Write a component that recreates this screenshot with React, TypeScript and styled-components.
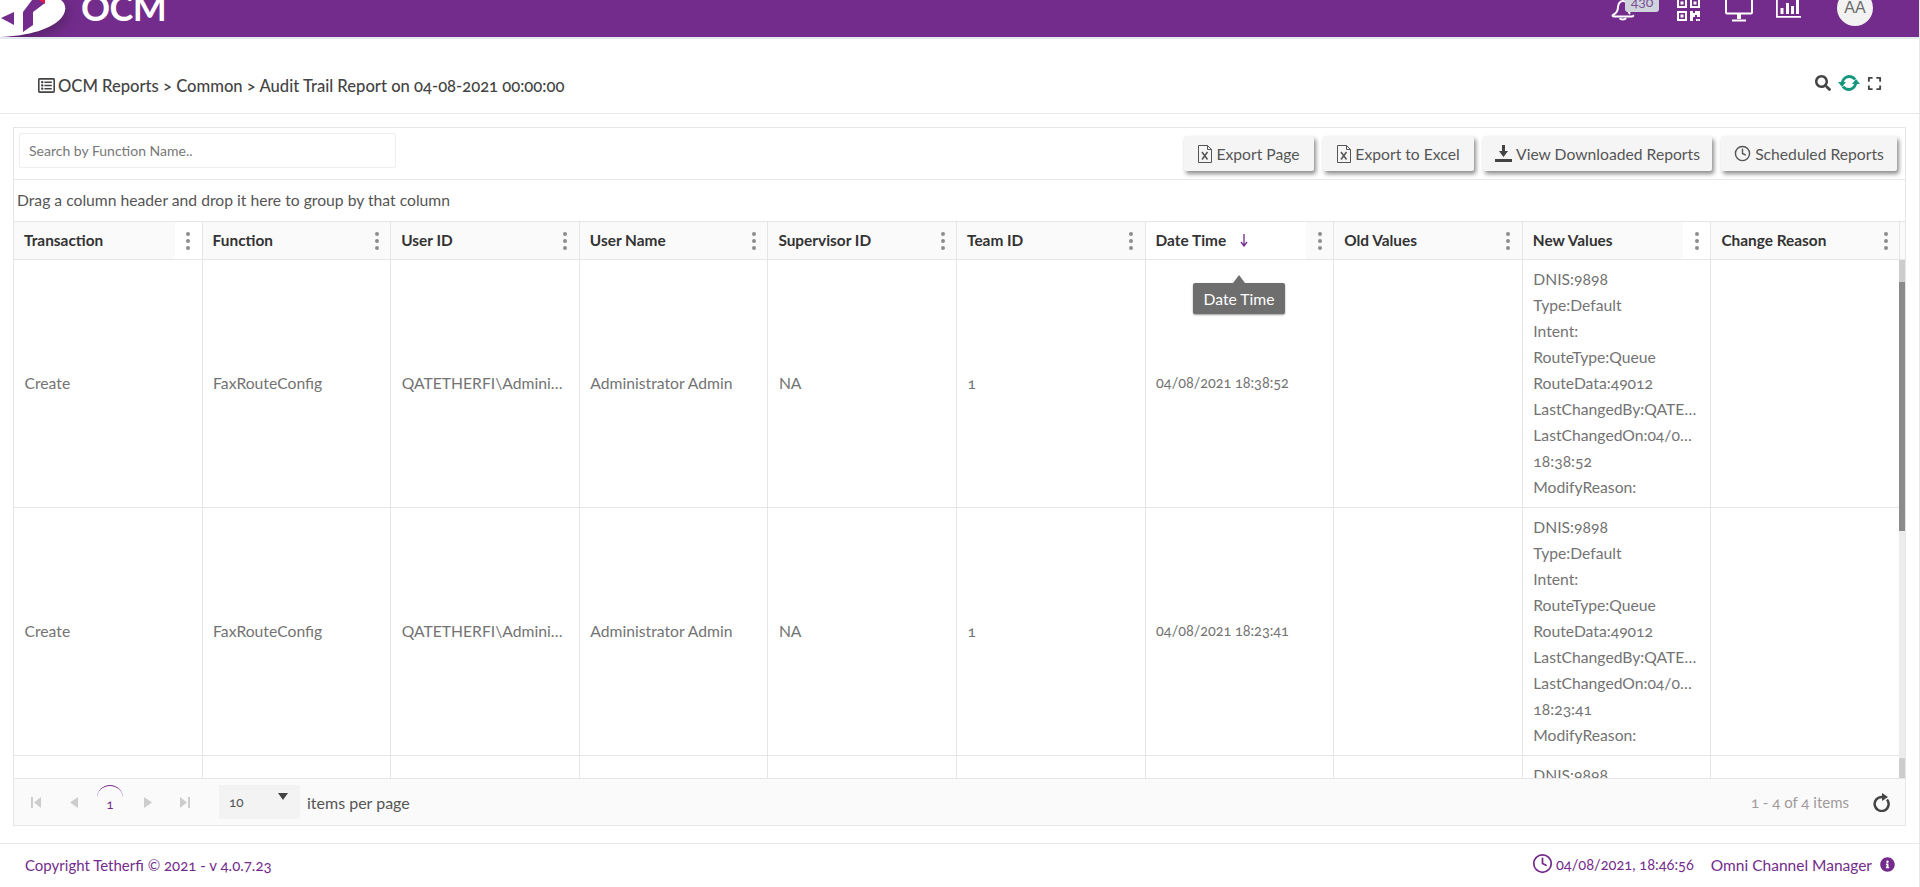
import React from "react";
import styled, { createGlobalStyle } from "styled-components";
import { FaRegListAlt, FaSearch, FaExpand, FaInfoCircle } from "react-icons/fa";
import { FiClock } from "react-icons/fi";

const Global = createGlobalStyle`
  html, body { margin: 0; padding: 0; background: #fff; overflow: hidden; }
  * { box-sizing: border-box; }
  body {
    font-family: Lato, "Open Sans", sans-serif;
    font-size: 15.7px;
    font-feature-settings: "onum" 1;
    color: #555;
  }
`;

const Page = styled.div`
  position: relative;
  height: 887px;
  display: flex;
  flex-direction: column;
  border-right: 1px solid #e8e8e8;
`;

const TopBar = styled.header`
  position: relative;
  height: 39px;
  flex: none;
  background: #732c8c;
  border-bottom: 2px solid #e6e8ef;
  display: flex;
  justify-content: space-between;
  align-items: flex-start;
  overflow: hidden;
`;

const Brand = styled.div`
  margin-left: 81px;
  margin-top: -12px;
  font-size: 36px;
  line-height: 39px;
  font-weight: 700;
  color: #fff;
  letter-spacing: -0.6px;
`;

const LogoBox = styled.svg`
  position: absolute;
  left: 0;
  top: 0;
  z-index: 3;
  overflow: visible;
  filter: drop-shadow(3px 4px 6px rgba(40, 20, 50, 0.38));
`;

const TopIcons = styled.div`
  position: relative;
  height: 37px;
  width: 320px;
  flex: none;
`;

const TopIcon = styled.svg<{ $x: number; $y: number }>`
  position: absolute;
  left: ${(p) => p.$x}px;
  top: ${(p) => p.$y}px;
  color: #fff;
`;

const Badge = styled.span`
  position: absolute;
  left: 26px;
  top: -8px;
  width: 34px;
  height: 20px;
  border-radius: 3px;
  background: #cfd4dc;
  color: #7b4f96;
  font-size: 14px;
  line-height: 20px;
  text-align: center;
`;

const Avatar = styled.span`
  position: absolute;
  left: 238px;
  top: -10px;
  width: 36px;
  height: 36px;
  border-radius: 50%;
  background: #f2f2f2;
  color: #6b6b6b;
  font-family: "Liberation Sans", sans-serif;
  font-size: 16px;
  display: flex;
  align-items: center;
  justify-content: center;
`;

const TitleBar = styled.div`
  height: 75px;
  flex: none;
  border-bottom: 1px solid #e8e8e8;
  padding: 19px 37px 0 38px;
  display: flex;
  align-items: center;
  justify-content: space-between;
`;

const Crumb = styled.div`
  display: flex;
  align-items: center;
  gap: 3px;
  font-size: 16.6px;
  font-weight: 500;
  color: #444;
`;

const TitleTools = styled.div`
  display: flex;
  align-items: center;
  gap: 7px;
  color: #444;
  margin-top: -5px;
`;

const Panel = styled.section`
  margin: 13px 13px 0 13px;
  height: 699px;
  width: 1893px;
  flex: none;
  border: 1px solid #e6e6e6;
  display: flex;
  flex-direction: column;
  overflow: hidden;
`;

const Toolbar = styled.div`
  height: 52px;
  flex: none;
  border-bottom: 1px solid #e8e8e8;
  padding: 5px 8px 0 5px;
  display: flex;
  justify-content: space-between;
  align-items: flex-start;
`;

const SearchBox = styled.input`
  width: 377px;
  height: 35px;
  padding: 0 9px;
  border: 1px solid #eeeeee;
  border-radius: 2px;
  font: inherit;
  font-size: 14px;
  color: #555;
  &::placeholder { color: #777; opacity: 1; }
`;

const ButtonRow = styled.div`
  display: flex;
  gap: 9px;
  padding-top: 3px;
`;

const ActionButton = styled.button<{ $w: number }>`
  width: ${(p) => p.$w}px;
  height: 35px;
  border: 0;
  border-radius: 2px;
  background: #f5f5f5;
  box-shadow: 2px 3px 4px rgba(0, 0, 0, 0.45);
  font: inherit;
  color: #555;
  display: flex;
  align-items: center;
  justify-content: center;
  gap: 4px;
  padding: 0;
  white-space: nowrap;
`;

const GroupHint = styled.div`
  height: 41px;
  flex: none;
  padding: 0 0 2px 3px;
  display: flex;
  align-items: center;
  color: #555;
`;

const Grid = styled.div`
  display: grid;
  grid-template-columns: repeat(10, 1fr);
  width: 1886px;
`;

const HeadRow = styled(Grid)`
  height: 39px;
  flex: none;
  border-top: 1px solid #e6e6e6;
  border-bottom: 1px solid #e6e6e6;
  background: #fafafa;
  width: 1891px;
  padding-right: 5px;
`;

const HeadCell = styled.div`
  border-right: 1px solid #e6e6e6;
  display: flex;
  align-items: stretch;
  justify-content: space-between;
  font-weight: 700;
  font-size: 15.4px;
  color: #333;
  min-width: 0;
`;

const HeadTitle = styled.div<{ $active?: boolean }>`
  flex: 1;
  padding: 0 0 1px 10px;
  background: ${(p) => (p.$active ? "#fff" : "transparent")};
  display: flex;
  align-items: center;
  gap: 14px;
`;

const Kebab = styled.div<{ $lit?: boolean }>`
  width: 27px;
  flex: none;
  background: ${(p) => (p.$lit ? "#fff" : "transparent")};
  display: flex;
  flex-direction: column;
  align-items: center;
  justify-content: center;
  gap: 3px;
  i {
    width: 4px;
    height: 4px;
    border-radius: 50%;
    background: #8d8d8d;
  }
`;

const Body = styled.div`
  position: relative;
  flex: 1;
  min-height: 0;
  overflow: hidden;
  color: #737373;
`;

const Row = styled(Grid)`
  height: 248px;
  border-bottom: 1px solid #e6e6e6;
`;

const Cell = styled.div<{ $small?: boolean }>`
  border-right: 1px solid #e6e6e6;
  padding: 0 10.5px 2px;
  font-size: ${(p) => (p.$small ? "14.4px" : "inherit")};
  display: flex;
  flex-direction: column;
  justify-content: center;
  min-width: 0;
`;

const Clip = styled.span`
  white-space: nowrap;
  overflow: hidden;
  text-overflow: ellipsis;
`;

const ValueLine = styled.div`
  height: 26px;
  line-height: 26px;
  white-space: nowrap;
  overflow: hidden;
  text-overflow: ellipsis;
`;

const ScrollTrack = styled.div`
  position: absolute;
  top: 0;
  right: 0;
  bottom: 0;
  width: 6px;
  display: grid;
  grid-template-rows: 22px 249px 1fr 20px;
  background: #ececec;
`;

const ScrollPart = styled.div<{ $c: string }>`
  background: ${(p) => p.$c};
`;

const Pager = styled.div`
  height: 47px;
  flex: none;
  border-top: 1px solid #e6e6e6;
  background: #fafafa;
  display: flex;
  align-items: center;
  padding: 0 14px 0 17px;
`;

const PagerNav = styled.div`
  align-self: stretch;
  display: flex;
  align-items: center;
  width: 188px;
`;

const NavSlot = styled.span<{ $w: number }>`
  width: ${(p) => p.$w}px;
  flex: none;
  display: flex;
  color: #cdcdcd;
`;

const PageNo = styled.span`
  align-self: flex-start;
  width: 26px;
  height: 26px;
  flex: none;
  margin: 6px 21px 0 1px;
  text-align: center;
  color: #732c8c;
  font-size: 13px;
  line-height: 36px;
  border-radius: 50%;
  border-top: 1px solid #732c8c;
`;

const SizeSelect = styled.div`
  position: relative;
  width: 81px;
  height: 34px;
  background: #f3f3f3;
  padding-left: 10px;
  display: flex;
  align-items: center;
  font-size: 13.5px;
  color: #555;
`;

const Caret = styled.span`
  position: absolute;
  right: 12px;
  top: 8px;
  border-left: 5px solid transparent;
  border-right: 5px solid transparent;
  border-top: 7px solid #444;
`;

const PerPage = styled.span`
  margin-left: 7px;
  font-size: 16px;
  color: #555;
`;

const Count = styled.span`
  margin-left: auto;
  font-size: 15px;
  color: #a09a9a;
`;

const Reload = styled.span`
  margin-left: 24px;
  display: flex;
  color: #444;
`;

const Footer = styled.footer`
  margin-top: 17px;
  height: 44px;
  flex: none;
  border-top: 1px solid #e8e8e8;
  padding: 0 24px 2px 25px;
  display: flex;
  align-items: center;
  justify-content: space-between;
  font-size: 15px;
  color: #732c8c;
`;

const FooterRight = styled.div`
  display: flex;
  align-items: center;
`;

const Clock = styled.span`
  display: flex;
  margin-right: 3px;
  margin-top: -3px;
`;

const ClockText = styled.span`
  font-size: 14.6px;
`;

const ProductName = styled.span`
  margin: 0 8px 0 17px;
  font-size: 15.5px;
`;

const Tooltip = styled.div`
  position: absolute;
  left: 1193px;
  top: 283px;
  width: 92px;
  height: 31px;
  z-index: 5;
  background: #6e6e6e;
  border-radius: 2px;
  color: #fff;
  box-shadow: 0 1px 2px rgba(0, 0, 0, 0.4);
  display: flex;
  align-items: center;
  justify-content: center;
  &::before {
    content: "";
    position: absolute;
    left: 40px;
    top: -8px;
    border-left: 6px solid transparent;
    border-right: 6px solid transparent;
    border-bottom: 8px solid #6e6e6e;
  }
`;

const columns = [
  "Transaction",
  "Function",
  "User ID",
  "User Name",
  "Supervisor ID",
  "Team ID",
  "Date Time",
  "Old Values",
  "New Values",
  "Change Reason",
];

const litKebabs = ["Transaction", "New Values"];

const rows = [
  { time: "18:38:52" },
  { time: "18:23:41" },
  { time: "18:11:07" },
];

function FileXIcon() {
  return (
    <svg width="14" height="18" viewBox="0 0 14 18" fill="none" stroke="#555">
      <path d="M.5.5h9l4 4v13H.5z" />
      <path d="M9.500.5v4h4" />
      <path d="M4 7l5.500 7.500M9.500 7L4 14.500" strokeWidth="1.500" />
    </svg>
  );
}

function DownloadIcon() {
  return (
    <svg width="17" height="18" viewBox="0 0 17 18" fill="#444">
      <path d="M7 0h3v6h3l-4.500 6L4 6h3z" />
      <rect y="14" width="17" height="3" />
    </svg>
  );
}

function SkipIcon({ flip }: { flip?: boolean }) {
  return (
    <svg
      width="10"
      height="11"
      viewBox="0 0 10 11"
      fill="currentColor"
      style={flip ? { transform: "scaleX(-1)" } : undefined}
    >
      <rect width="2" height="11" />
      <path d="M10 0v11L3 5.500z" />
    </svg>
  );
}

function ArrowIcon({ flip }: { flip?: boolean }) {
  return (
    <svg
      width="8"
      height="11"
      viewBox="0 0 8 11"
      fill="currentColor"
      style={flip ? { transform: "scaleX(-1)" } : undefined}
    >
      <path d="M8 0v11L0 5.500z" />
    </svg>
  );
}

function SyncIcon() {
  return (
    <svg width="22" height="18" viewBox="0 0 22 16" fill="none" stroke="#15967f" strokeWidth="2.800">
      <path d="M4 8C5 3 9 1.500 11 1.500c3 0 5 1.500 6 3" />
      <path d="M18 8c-1 5-5 6.500-7 6.500-3 0-5-1.500-6-3" />
      <path d="M0 7h8l-4 5zM14 9h8l-4-5z" fill="#15967f" stroke="none" />
    </svg>
  );
}

function ReloadIcon() {
  return (
    <svg width="18" height="20" viewBox="0 0 18 20" fill="none" stroke="#444" strokeWidth="2.500">
      <path d="M14 7.500A7 7 0 1 1 9 5" />
      <path d="M9 1l6 4-6 4z" fill="#444" stroke="none" />
    </svg>
  );
}

function Logo() {
  return (
    <LogoBox width="66" height="38" viewBox="0 0 66 38">
      <path d="M0 37C28 36 53 29 62 17 67 10 66 4 61 0H0z" fill="#fff" />
      <path d="M1 18l13-6v13z" fill="#732c8c" />
      <path d="M32 0h10l3 3-12 9v13l-10 7V12z" fill="#732c8c" />
      <path d="M39 0h6v4z" fill="#e6194b" />
    </LogoBox>
  );
}

function TopBarIcons() {
  return (
    <TopIcons>
      <TopIcon $x={12} $y={-2} width="24" height="24" viewBox="0 0 24 24" fill="none" stroke="currentColor" strokeWidth="2">
        <path d="M19 16c-1.500-1.500-2-4-2-7 0-3-2-6-5-6S7 6 7 9c0 3-1 6-5 8-1 1 0 1.500 1 1.500h18c1 0 1.500-.5 1-1.500" />
        <path d="M9 20c.5 2 5 2 6 0" />
      </TopIcon>
      <Badge>430</Badge>
      <TopIcon $x={78} $y={-2} width="23" height="23" viewBox="0 0 23 23" fill="currentColor">
        <path fillRule="evenodd" d="M0 0h10v10H0zM2 2v6h6V2zM13 0h10v10H13zM15 2v6h6V2zM0 13h10v10H0zM2 15v6h6v-6z" />
        <rect x="3.500" y="3.500" width="3" height="3" />
        <rect x="16.500" y="3.500" width="3" height="3" />
        <rect x="3.500" y="16.500" width="3" height="3" />
        <path d="M13 13h3v2h2v-2h5v6h-3v-2h-2v2h-2v4h-3z" />
        <rect x="19" y="21" width="1.800" height="2" />
        <rect x="21.200" y="21" width="1.800" height="2" />
      </TopIcon>
      <TopIcon $x={126} $y={-6} width="28" height="28" viewBox="0 0 28 28" fill="none" stroke="currentColor" strokeWidth="2">
        <path d="M1 0v18.500a1 1 0 001 1h24a1 1 0 001-1V0" />
        <path d="M14 20v5" strokeWidth="4" />
        <path d="M7 26.500h14" />
      </TopIcon>
      <TopIcon $x={177} $y={-6} width="25" height="25" viewBox="0 0 25 25" fill="currentColor">
        <path d="M0 0h1.800v22H25v1.800H0z" />
        <rect x="4.500" y="14" width="3" height="6" />
        <rect x="10" y="9" width="3" height="11" />
        <rect x="15" y="12" width="3" height="8" />
        <rect x="20" y="5" width="3" height="15" />
      </TopIcon>
      <Avatar>AA</Avatar>
    </TopIcons>
  );
}

function NewValues({ time }: { time: string }) {
  const lines = [
    "DNIS:9898",
    "Type:Default",
    "Intent:",
    "RouteType:Queue",
    "RouteData:49012",
    "LastChangedBy:QATETHERFI\\Administrator",
    "LastChangedOn:04/08/2021",
    time,
    "ModifyReason:",
  ];
  return (
    <>
      {lines.map((line, i) => (
        <ValueLine key={i}>{line}</ValueLine>
      ))}
    </>
  );
}

export default function App() {
  return (
    <Page>
      <Global />
      <TopBar>
        <Logo />
        <Brand>OCM</Brand>
        <TopBarIcons />
      </TopBar>

      <TitleBar>
        <Crumb>
          <FaRegListAlt size={17} />
          OCM Reports &gt; Common &gt; Audit Trail Report on 04-08-2021 00:00:00
        </Crumb>
        <TitleTools>
          <FaSearch size={16} />
          <SyncIcon />
          <FaExpand size={15} />
        </TitleTools>
      </TitleBar>

      <Panel>
        <Toolbar>
          <SearchBox placeholder="Search by Function Name.." />
          <ButtonRow>
            <ActionButton $w={130}>
              <FileXIcon /> Export Page
            </ActionButton>
            <ActionButton $w={151}>
              <FileXIcon /> Export to Excel
            </ActionButton>
            <ActionButton $w={229}>
              <DownloadIcon /> View Downloaded Reports
            </ActionButton>
            <ActionButton $w={176}>
              <FiClock size={17} /> Scheduled Reports
            </ActionButton>
          </ButtonRow>
        </Toolbar>

        <GroupHint>Drag a column header and drop it here to group by that column</GroupHint>

        <HeadRow>
          {columns.map((name) => (
            <HeadCell key={name}>
              <HeadTitle $active={name === "Date Time"}>
                {name}
                {name === "Date Time" && (
                  <svg width="8" height="14" viewBox="0 0 8 14" fill="none" stroke="#732c8c">
                    <path d="M4 1v11M1 9l3 4 3-4" strokeWidth="1.300" />
                  </svg>
                )}
              </HeadTitle>
              <Kebab $lit={litKebabs.includes(name)}>
                <i />
                <i />
                <i />
              </Kebab>
            </HeadCell>
          ))}
        </HeadRow>

        <Body>
          {rows.map((row) => (
            <Row key={row.time}>
              <Cell>Create</Cell>
              <Cell>FaxRouteConfig</Cell>
              <Cell>
                <Clip>QATETHERFI\Administrator</Clip>
              </Cell>
              <Cell>Administrator Admin</Cell>
              <Cell>NA</Cell>
              <Cell>1</Cell>
              <Cell $small>04/08/2021 {row.time}</Cell>
              <Cell />
              <Cell>
                <NewValues time={row.time} />
              </Cell>
              <Cell />
            </Row>
          ))}
          <ScrollTrack>
            <ScrollPart $c="#cdcdcd" />
            <ScrollPart $c="#8a8a8a" />
            <ScrollPart $c="#ececec" />
            <ScrollPart $c="#cdcdcd" />
          </ScrollTrack>
        </Body>

        <Pager>
          <PagerNav>
            <NavSlot $w={39}>
              <SkipIcon />
            </NavSlot>
            <NavSlot $w={26}>
              <ArrowIcon />
            </NavSlot>
            <PageNo>1</PageNo>
            <NavSlot $w={36}>
              <ArrowIcon flip />
            </NavSlot>
            <NavSlot $w={10}>
              <SkipIcon flip />
            </NavSlot>
          </PagerNav>
          <SizeSelect>
            10
            <Caret />
          </SizeSelect>
          <PerPage>items per page</PerPage>
          <Count>1 - 4 of 4 items</Count>
          <Reload>
            <ReloadIcon />
          </Reload>
        </Pager>
      </Panel>

      <Footer>
        <span>Copyright Tetherfi © 2021 - v 4.0.7.23</span>
        <FooterRight>
          <Clock>
            <FiClock size={21} />
          </Clock>
          <ClockText>04/08/2021, 18:46:56</ClockText>
          <ProductName>Omni Channel Manager</ProductName>
          <FaInfoCircle size={15} />
        </FooterRight>
      </Footer>

      <Tooltip>Date Time</Tooltip>
    </Page>
  );
}
